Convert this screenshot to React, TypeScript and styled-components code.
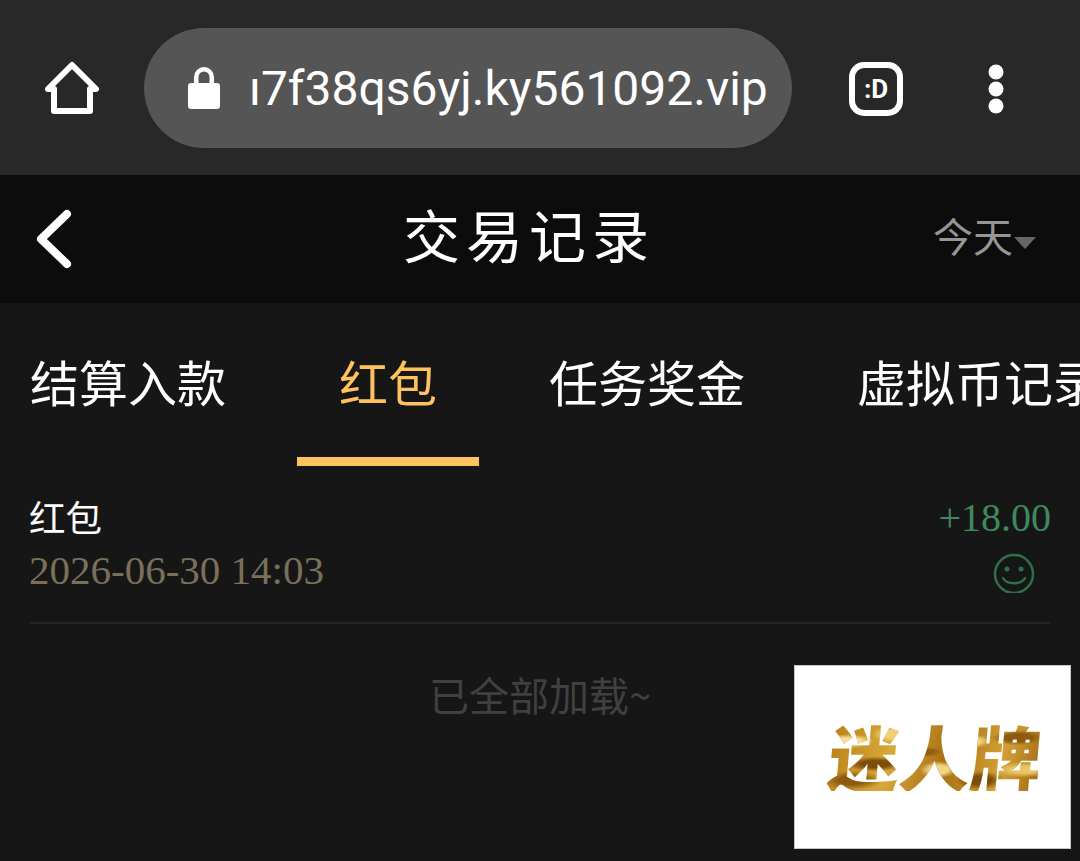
import React, { FC } from 'react';
import styled, { createGlobalStyle } from 'styled-components';

const GlobalStyle = createGlobalStyle`
	html, body {
		margin: 0;
		padding: 0;
		background: #161616;
	}
	* {
		box-sizing: border-box;
	}
`;

const Page = styled.div`
	position: relative;
	width: 1080px;
	height: 861px;
	overflow: hidden;
	background: #161616;
	font-family: 'Noto Sans CJK SC', 'Noto Sans', sans-serif;
`;

const BrowserBar = styled.div`
	display: flex;
	align-items: center;
	height: 175px;
	padding: 3px 0 0 44px;
	background: #282828;
`;

const HomeButton = styled.svg`
	width: 56px;
	height: 56px;
	margin-right: 44px;
	flex: none;
`;

const UrlPill = styled.div`
	display: flex;
	align-items: center;
	width: 648px;
	height: 120px;
	padding: 0 25px 0 44px;
	margin-top: -3px;
	border-radius: 60px;
	background: #555555;
	flex: none;
`;

const LockIcon = styled.svg`
	width: 32px;
	height: 42px;
	margin-right: 29px;
	flex: none;
`;

const UrlText = styled.span`
	margin-top: 3px;
	font-family: Roboto, sans-serif;
	font-size: 48px;
	color: #ffffff;
	white-space: nowrap;
	line-height: 1;
`;

const DesktopIcon = styled.svg`
	width: 56px;
	height: 56px;
	margin-left: 56px;
	flex: none;
`;

const MenuIcon = styled.svg`
	width: 18px;
	height: 52px;
	margin-left: 83px;
	flex: none;
`;

const TitleBar = styled.div`
	display: flex;
	align-items: center;
	height: 128px;
	background: #0c0c0c;
`;

const BackSlot = styled.div`
	display: flex;
	align-items: center;
	width: 403px;
	padding-left: 34px;
	flex: none;
`;

const Title = styled.h1`
	margin: -12px 0 0;
	font-size: 57px;
	font-weight: 400;
	letter-spacing: 6px;
	color: #ffffff;
	white-space: nowrap;
`;

const DateFilter = styled.div`
	display: flex;
	align-items: center;
	margin: -8px 0 0 auto;
	padding-right: 44px;
	font-size: 40px;
	color: #969696;
`;

const Caret = styled.span`
	width: 0;
	height: 0;
	margin: 16px 0 0 1px;
	border-left: 11px solid transparent;
	border-right: 11px solid transparent;
	border-top: 12px solid #666666;
`;

const Tabs = styled.div`
	display: flex;
	gap: 28px;
	height: 163px;
	padding-left: 30px;
	overflow: hidden;
`;

const Tab = styled.div<{ $active?: boolean; $first?: boolean }>`
	display: flex;
	align-items: center;
	height: 163px;
	padding: 0 ${({ $first }) => ($first ? 43 : 42)}px 0 ${({ $first }) => ($first ? 0 : 42)}px;
	font-size: 49px;
	white-space: nowrap;
	flex: none;
	color: ${({ $active }) => ($active ? '#fdc35f' : '#ffffff')};
	border-bottom: 9px solid ${({ $active }) => ($active ? '#fdc35f' : 'transparent')};
`;

const Record = styled.div`
	display: flex;
	justify-content: space-between;
	height: 158px;
	margin: 0 29px;
	padding-top: 25px;
	border-bottom: 2px solid #252525;
`;

const RecordInfo = styled.div`
	display: flex;
	flex-direction: column;
`;

const RecordName = styled.span`
	font-size: 36.5px;
	line-height: 52px;
	color: #ffffff;
`;

const RecordTime = styled.span`
	margin-top: 2px;
	font-family: 'Liberation Serif', serif;
	font-size: 41px;
	line-height: 50px;
	color: #7a705a;
`;

const RecordResult = styled.div`
	display: flex;
	flex-direction: column;
	align-items: flex-end;
	padding-top: 1px;
`;

const Amount = styled.span`
	font-family: 'Liberation Serif', serif;
	font-size: 40px;
	line-height: 52px;
	color: #3f8a5c;
`;

const SmileIcon = styled.svg`
	width: 42px;
	height: 40px;
	margin: 9px 16px 0 0;
`;

const LoadedNote = styled.div`
	margin: 41px 0 0 429px;
	font-size: 40px;
	line-height: 58px;
	color: #404040;
	white-space: nowrap;
`;

const FloatingAd = styled.div`
	position: absolute;
	left: 794px;
	top: 665px;
	display: flex;
	align-items: center;
	justify-content: center;
	width: 277px;
	height: 184px;
	padding: 0 0 4px 6px;
	background: #ffffff;
	border: 1px solid #c8c8c8;
`;

const AdLabel = styled.span`
	font-size: 71px;
	font-weight: 900;
	line-height: 1;
	white-space: nowrap;
	transform: skewX(-5deg);
	color: transparent;
	background:
		radial-gradient(ellipse at 8% 30%, #f5e09a 0 5%, transparent 10%),
		radial-gradient(ellipse at 22% 62%, #7c4d0a 0 6%, transparent 12%),
		radial-gradient(ellipse at 30% 20%, #f0d078 0 5%, transparent 11%),
		radial-gradient(ellipse at 46% 45%, #8f5d10 0 4%, transparent 9%),
		radial-gradient(ellipse at 52% 70%, #f2d685 0 6%, transparent 12%),
		radial-gradient(ellipse at 66% 30%, #f0d27c 0 5%, transparent 10%),
		radial-gradient(ellipse at 72% 85%, #7c4d0a 0 5%, transparent 11%),
		radial-gradient(ellipse at 88% 25%, #8a5a10 0 5%, transparent 10%),
		radial-gradient(ellipse at 92% 70%, #e9c566 0 5%, transparent 11%),
		radial-gradient(ellipse at 12% 85%, #8a5a10 0 5%, transparent 11%),
		linear-gradient(100deg, #b98018, #d8a83a 30%, #a96f14 55%, #d2a035 80%, #a06a14);
	-webkit-background-clip: text;
	background-clip: text;
`;

const App: FC = () => (
	<>
		<GlobalStyle />
		<Page>
			<BrowserBar>
				<HomeButton viewBox="0 0 56 56" fill="none">
					<path
						d="M4 28 L28 4 L52 28 H46 V50 H10 V28 Z"
						stroke="#fff"
						strokeWidth="6"
						strokeLinejoin="round"
					/>
				</HomeButton>
				<UrlPill>
					<LockIcon viewBox="0 0 32 42">
						<path
							d="M3 16 H6 V10 A10 10 0 0 1 26 10 V16 H29 A3 3 0 0 1 32 19 V39 A3 3 0 0 1 29 42 H3 A3 3 0 0 1 0 39 V19 A3 3 0 0 1 3 16 Z M10.500 16 H21.500 V10 A5.500 5.500 0 0 0 10.500 10 Z"
							fill="#fff"
							fillRule="evenodd"
						/>
					</LockIcon>
					<UrlText>ı7f38qs6yj.ky561092.vip</UrlText>
				</UrlPill>
				<DesktopIcon viewBox="0 0 56 56" fill="none">
					<rect x="4" y="4" width="48" height="48" rx="12" stroke="#fff" strokeWidth="6" />
					<text x="28" y="37" textAnchor="middle" fontFamily="Roboto, sans-serif" fontSize="26" fontWeight="700" fill="#fff">
						:D
					</text>
				</DesktopIcon>
				<MenuIcon viewBox="0 0 18 52" fill="#fff">
					<circle cx="9" cy="9" r="7.500" />
					<circle cx="9" cy="26" r="7.500" />
					<circle cx="9" cy="43" r="7.500" />
				</MenuIcon>
			</BrowserBar>
			<TitleBar>
				<BackSlot>
					<svg width="40" height="60" viewBox="0 0 40 60" fill="none">
						<path d="M33 5 L7 30 L33 55" stroke="#fff" strokeWidth="8" strokeLinecap="round" strokeLinejoin="round" />
					</svg>
				</BackSlot>
				<Title>交易记录</Title>
				<DateFilter>
					今天
					<Caret />
				</DateFilter>
			</TitleBar>
			<Tabs>
				<Tab $first>结算入款</Tab>
				<Tab $active>红包</Tab>
				<Tab>任务奖金</Tab>
				<Tab>虚拟币记录</Tab>
			</Tabs>
			<Record>
				<RecordInfo>
					<RecordName>红包</RecordName>
					<RecordTime>2026-06-30 14:03</RecordTime>
				</RecordInfo>
				<RecordResult>
					<Amount>+18.00</Amount>
					<SmileIcon viewBox="0 0 42 40" fill="none">
						<circle cx="21" cy="21" r="19" stroke="#2f6f4a" strokeWidth="2.500" />
						<circle cx="14" cy="16" r="2.500" fill="#2f6f4a" />
						<circle cx="28" cy="16" r="2.500" fill="#2f6f4a" />
						<path d="M10 25 C14 32 28 32 32 25" stroke="#2f6f4a" strokeWidth="2.500" strokeLinecap="round" />
					</SmileIcon>
				</RecordResult>
			</Record>
			<LoadedNote>已全部加载~</LoadedNote>
			<FloatingAd>
				<AdLabel>迷人牌</AdLabel>
			</FloatingAd>
		</Page>
	</>
);

export default App;
